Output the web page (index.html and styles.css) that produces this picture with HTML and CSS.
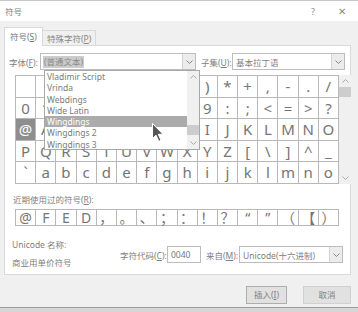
FILE: index.html
```html
<!DOCTYPE html>
<html lang="zh-CN">
<head>
    <meta charset="UTF-8">
    <title>符号</title>
    <link rel="stylesheet" href="styles.css">
</head>
<body>
    <div class="dialog">
        <div class="titlebar">
            <span class="title">符号</span>
            <span class="help">?</span>
            <span class="close">&#x2715;</span>
        </div>
        <div class="content">
            <div class="tabs">
                <div class="tab active">符号(<u>S</u>)</div>
                <div class="tab">特殊字符(<u>P</u>)</div>
            </div>
            <div class="panel">
                <div class="font-row">
                    <span class="lbl font-lbl">字体(<u>F</u>):</span>
                    <div class="combo font-combo">
                        <span class="sel-text">(普通文本)</span>
                        <span class="arrow"><svg width="7" height="4" viewBox="0 0 7 4"><polyline points="0.5,0.5 3.5,3.5 6.5,0.5" fill="none" stroke="#888" stroke-width="1"/></svg></span>
                    </div>
                    <span class="lbl subset-lbl">子集(<u>U</u>):</span>
                    <div class="combo subset-combo">
                        <span class="value">基本拉丁语</span>
                        <span class="arrow"><svg width="7" height="4" viewBox="0 0 7 4"><polyline points="0.5,0.5 3.5,3.5 6.5,0.5" fill="none" stroke="#888" stroke-width="1"/></svg></span>
                    </div>
                </div>

                <div class="grid-wrap">
                    <div class="grid">
                        <div class="cell"></div><div class="cell">!</div><div class="cell">&quot;</div><div class="cell">#</div><div class="cell">$</div><div class="cell">%</div><div class="cell">&amp;</div><div class="cell">'</div><div class="cell">(</div><div class="cell">)</div><div class="cell">*</div><div class="cell">+</div><div class="cell">,</div><div class="cell">-</div><div class="cell">.</div><div class="cell">/</div>
                        <div class="cell">0</div><div class="cell">1</div><div class="cell">2</div><div class="cell">3</div><div class="cell">4</div><div class="cell">5</div><div class="cell">6</div><div class="cell">7</div><div class="cell">8</div><div class="cell">9</div><div class="cell">:</div><div class="cell">;</div><div class="cell">&lt;</div><div class="cell">=</div><div class="cell">&gt;</div><div class="cell">?</div>
                        <div class="cell selected">@</div><div class="cell">A</div><div class="cell">B</div><div class="cell">C</div><div class="cell">D</div><div class="cell">E</div><div class="cell">F</div><div class="cell">G</div><div class="cell">H</div><div class="cell">I</div><div class="cell">J</div><div class="cell">K</div><div class="cell">L</div><div class="cell">M</div><div class="cell">N</div><div class="cell">O</div>
                        <div class="cell">P</div><div class="cell">Q</div><div class="cell">R</div><div class="cell">S</div><div class="cell">T</div><div class="cell">U</div><div class="cell">V</div><div class="cell">W</div><div class="cell">X</div><div class="cell">Y</div><div class="cell">Z</div><div class="cell">[</div><div class="cell">\</div><div class="cell">]</div><div class="cell">^</div><div class="cell">_</div>
                        <div class="cell">`</div><div class="cell">a</div><div class="cell">b</div><div class="cell">c</div><div class="cell">d</div><div class="cell">e</div><div class="cell">f</div><div class="cell">g</div><div class="cell">h</div><div class="cell">i</div><div class="cell">j</div><div class="cell">k</div><div class="cell">l</div><div class="cell">m</div><div class="cell">n</div><div class="cell">o</div>
                    </div>
                    <div class="vscroll">
                        <span class="sb-arrow"><svg width="7" height="4" viewBox="0 0 7 4"><polyline points="0.5,3.5 3.5,0.5 6.5,3.5" fill="none" stroke="#aaa" stroke-width="1"/></svg></span>
                        <span class="sb-track"><span class="sb-thumb"></span></span>
                        <span class="sb-arrow"><svg width="7" height="4" viewBox="0 0 7 4"><polyline points="0.5,0.5 3.5,3.5 6.5,0.5" fill="none" stroke="#aaa" stroke-width="1"/></svg></span>
                    </div>

                    <!-- open font dropdown -->
                    <div class="font-list">
                        <ul class="items">
                            <li>Vladimir Script</li>
                            <li>Vrinda</li>
                            <li>Webdings</li>
                            <li>Wide Latin</li>
                            <li class="hover">Wingdings</li>
                            <li>Wingdings 2</li>
                            <li>Wingdings 3</li>
                        </ul>
                        <div class="list-scroll">
                            <span class="sb-arrow"><svg width="7" height="4" viewBox="0 0 7 4"><polyline points="0.5,3.5 3.5,0.5 6.5,3.5" fill="none" stroke="#aaa" stroke-width="1"/></svg></span>
                            <span class="sb-track"><span class="list-thumb"></span></span>
                            <span class="sb-arrow"><svg width="7" height="4" viewBox="0 0 7 4"><polyline points="0.5,0.5 3.5,3.5 6.5,0.5" fill="none" stroke="#aaa" stroke-width="1"/></svg></span>
                        </div>
                    </div>
                    <svg class="cursor" width="12" height="19" viewBox="0 0 12 19">
                        <path d="M0.5 0.5 L0.5 15.5 L4 12.2 L6.8 18.3 L9 17.3 L6.3 11.3 L11 11.3 Z" fill="#555" stroke="#fff" stroke-width="1"/>
                    </svg>
                </div>

                <div class="recent-lbl">近期使用过的符号(<u>R</u>):</div>
                <div class="recent">
                    <div class="rcell">@</div><div class="rcell">F</div><div class="rcell">E</div><div class="rcell">D</div><div class="rcell">，</div><div class="rcell">。</div><div class="rcell">、</div><div class="rcell">；</div><div class="rcell">：</div><div class="rcell">！</div><div class="rcell">？</div><div class="rcell">“</div><div class="rcell">”</div><div class="rcell">（</div><div class="rcell">【</div><div class="rcell">）</div>
                </div>

                <div class="info">
                    <div class="info-left">
                        <div class="lbl line">Unicode 名称:</div>
                        <div class="lbl line">商业用单价符号</div>
                    </div>
                    <div class="info-right">
                        <span class="lbl code-lbl">字符代码(<u>C</u>):</span>
                        <div class="input">0040</div>
                        <span class="lbl from-lbl">来自(<u>M</u>):</span>
                        <div class="combo from-combo">
                            <span class="value">Unicode(十六进制)</span>
                            <span class="arrow"><svg width="7" height="4" viewBox="0 0 7 4"><polyline points="0.5,0.5 3.5,3.5 6.5,0.5" fill="none" stroke="#888" stroke-width="1"/></svg></span>
                        </div>
                    </div>
                </div>
            </div>

            <div class="buttons">
                <div class="btn insert">插入(<u>I</u>)</div>
                <div class="btn cancel">取消</div>
            </div>
        </div>
    </div>
</body>
</html>
```

FILE: styles.css
```css
body, html {
    margin: 0;
    padding: 0;
}
body {
    width: 358px;
    height: 312px;
    overflow: hidden;
    background: #d6d6d6;
    font-family: "Noto Sans", "Noto Sans CJK SC", sans-serif;
    color: #777;
}
u {
    text-decoration: underline;
}
.dialog {
    width: 358px;
    height: 308px;
    box-sizing: border-box;
    background: #f0f0f0;
    border-top: 1px solid #c8c8c8;
    border-bottom: 1px solid #9a9a9a;
}
.titlebar {
    height: 20px;
    background: #fff;
    display: flex;
    align-items: center;
    font-size: 8.5px;
    color: #808080;
}
.title {
    margin-left: 5px;
    flex: 1;
}
.help {
    font-size: 9px;
    color: #8a8a8a;
    margin-right: 23px;
}
.close {
    font-size: 10px;
    color: #8a8a8a;
    margin-right: 12px;
}
.content {
    padding: 6px 7px 0 4px;
}
.tabs {
    display: flex;
    align-items: flex-end;
    height: 18px;
    font-size: 8.5px;
    position: relative;
    z-index: 1;
}
.tab {
    height: 15px;
    line-height: 15px;
    padding: 0 4px;
    border: 1px solid #d9d9d9;
    border-bottom: none;
    background: #f0f0f0;
    color: #858585;
    box-sizing: border-box;
    white-space: nowrap;
}
.tab.active {
    height: 19px;
    line-height: 18px;
    width: 39px;
    padding: 0 0 0 5px;
    background: #fff;
    color: #777;
    margin-bottom: -1px;
}
.tab + .tab {
    border-left: none;
}
.panel {
    height: 230px;
    box-sizing: border-box;
    background: #fff;
    border: 1px solid #d9d9d9;
    padding: 7px 0 0 4px;
}
.lbl {
    font-size: 8.5px;
    color: #808080;
    white-space: nowrap;
}
.font-row {
    display: flex;
    align-items: center;
    height: 17px;
}
.font-lbl,
.subset-lbl {
    width: 31px;
}
.subset-lbl {
    margin-left: 5px;
}
.combo {
    height: 17px;
    box-sizing: border-box;
    border: 1px solid #bdbdbd;
    display: flex;
    align-items: center;
    font-size: 8.5px;
    color: #808080;
    white-space: nowrap;
}
.combo .value {
    flex: 1;
    padding-left: 3px;
}
.combo .arrow {
    width: 12px;
    height: 15px;
    border-left: 1px solid #d3d3d3;
    background: #ececec;
    display: flex;
    align-items: center;
    justify-content: center;
}
.font-combo {
    width: 156px;
    justify-content: space-between;
}
.sel-text {
    margin-left: 2px;
    padding: 0 1px;
    background: #cccccc;
    color: #8a8a8a;
    line-height: 12px;
}
.subset-combo {
    width: 113px;
}
.grid-wrap {
    position: relative;
    display: flex;
    margin: 5px 0 0 6px;
    width: 336px;
}
.grid {
    width: 324px;
    display: grid;
    grid-template-columns: repeat(16, 1fr);
    grid-template-rows: 22px 21px 22px 21px 22px;
    border-top: 1px solid #b8b8b8;
    border-left: 1px solid #b8b8b8;
    box-sizing: border-box;
}
.cell {
    border-right: 1px solid #b8b8b8;
    border-bottom: 1px solid #b8b8b8;
    display: flex;
    align-items: center;
    justify-content: center;
    font-size: 15px;
    color: #757575;
    line-height: 1;
}
.cell.selected {
    background: #8e8e8e;
    color: #fff;
}
.vscroll,
.list-scroll {
    width: 12px;
    background: #f0f0f0;
    display: flex;
    flex-direction: column;
}
.sb-arrow {
    height: 12px;
    display: flex;
    align-items: center;
    justify-content: center;
}
.sb-track {
    flex: 1;
}
.sb-thumb {
    display: block;
    height: 10px;
    background: #cdcdcd;
}
.font-list {
    position: absolute;
    left: 29px;
    top: -5px;
    width: 156px;
    height: 80px;
    box-sizing: border-box;
    border: 1px solid #a8a8a8;
    background: #fff;
    display: flex;
}
.items {
    list-style: none;
    margin: 0;
    padding: 0;
    flex: 1;
}
.items li {
    height: 11.3px;
    line-height: 11.3px;
    padding-left: 2px;
    font-size: 8.5px;
    color: #7a7a7a;
}
.items li.hover {
    background: #ababab;
    color: #fff;
}
.list-scroll .sb-track {
    display: flex;
    flex-direction: column;
    justify-content: flex-end;
}
.list-thumb {
    display: block;
    height: 10px;
    margin-bottom: 2px;
    background: #cdcdcd;
}
.cursor {
    position: absolute;
    left: 137px;
    top: 48px;
}
.recent-lbl {
    margin-top: 10px;
    height: 12px;
    line-height: 12px;
    font-size: 8.5px;
    color: #808080;
    margin-left: 4px;
}
.recent {
    margin: 3px 0 0 6px;
    width: 324px;
    height: 17px;
    display: grid;
    grid-template-columns: repeat(16, 1fr);
    border: 1px solid #b8b8b8;
    border-right: none;
    box-sizing: border-box;
}
.rcell {
    border-right: 1px solid #b8b8b8;
    display: flex;
    align-items: center;
    justify-content: center;
    font-size: 14px;
    color: #757575;
    line-height: 1;
}
.info {
    display: flex;
    margin-top: 10px;
}
.info-left {
    width: 111px;
    padding-left: 3px;
    box-sizing: border-box;
}
.info-left .line {
    height: 18px;
    line-height: 18px;
}
.info-right {
    display: flex;
    align-items: center;
    margin-top: 10px;
    height: 17px;
}
.code-lbl {
    width: 47px;
}
.input {
    width: 34px;
    height: 17px;
    box-sizing: border-box;
    border: 1px solid #bdbdbd;
    font-size: 8.5px;
    line-height: 15px;
    padding-left: 3px;
    color: #777;
}
.from-lbl {
    margin-left: 5px;
    width: 33px;
}
.from-combo {
    width: 104px;
}
.buttons {
    display: flex;
    justify-content: flex-end;
    gap: 16px;
    margin-top: 11px;
}
.btn {
    height: 18px;
    box-sizing: border-box;
    border: 1px solid #adadad;
    background: #e1e1e1;
    font-size: 8.5px;
    line-height: 16px;
    text-align: center;
    color: #808080;
}
.btn.insert {
    width: 41px;
}
.btn.cancel {
    width: 48px;
    border-color: #d0d0d0;
}
```
